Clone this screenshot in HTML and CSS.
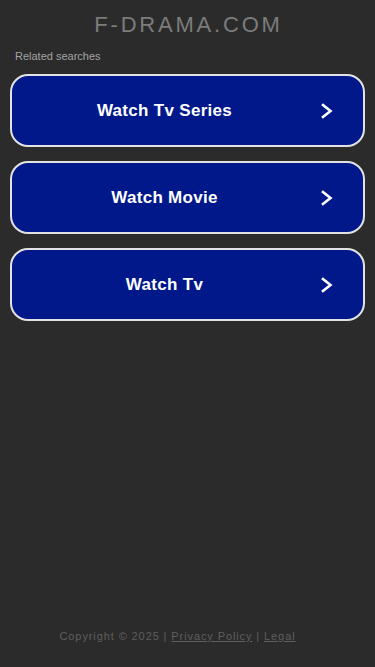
FILE: index.html
```html
<!DOCTYPE html>
<html lang="en">
<head>
<meta charset="utf-8">
<meta name="viewport" content="width=device-width, initial-scale=1">
<title>f-drama.com</title>
<link rel="stylesheet" href="styles.css">
</head>
<body>
<div class="page">
  <header class="header">
    <div class="domain">F-DRAMA.COM</div>
  </header>
  <main class="main">
    <div class="related">Related searches</div>
    <div class="links">
      <a class="link" href="#"><span class="link-text">Watch Tv Series</span><svg class="chev" width="20" height="20" viewBox="0 0 20 20"><path d="M6 4 L13.5 10 L6 16" fill="none" stroke="#fff" stroke-width="2.6" stroke-linecap="square" stroke-linejoin="miter"/></svg></a>
      <a class="link" href="#"><span class="link-text">Watch Movie</span><svg class="chev" width="20" height="20" viewBox="0 0 20 20"><path d="M6 4 L13.5 10 L6 16" fill="none" stroke="#fff" stroke-width="2.6" stroke-linecap="square" stroke-linejoin="miter"/></svg></a>
      <a class="link" href="#"><span class="link-text">Watch Tv</span><svg class="chev" width="20" height="20" viewBox="0 0 20 20"><path d="M6 4 L13.5 10 L6 16" fill="none" stroke="#fff" stroke-width="2.6" stroke-linecap="square" stroke-linejoin="miter"/></svg></a>
    </div>
  </main>
  <footer class="footer">
    Copyright © 2025 | <a href="#" class="flink">Privacy Policy</a> | <a href="#" class="flink">Legal</a>
  </footer>
</div>
</body>
</html>
```
FILE: styles.css
```css
html, body {
  margin: 0;
  padding: 0;
  background: #2b2b2b;
}
body {
  font-family: "Liberation Sans", Arial, sans-serif;
}
.page {
  min-height: 667px;
  display: flex;
  flex-direction: column;
}
.header {
  padding-top: 12px;
  text-align: center;
}
.domain {
  font-size: 22px;
  line-height: 25px;
  color: #7c7c7c;
  letter-spacing: 2.8px;
  padding-left: 2px;
}
.main {
  padding: 12px 10px 0 10px;
}
.related {
  font-size: 11px;
  line-height: 14px;
  color: #a3a3a3;
  padding-left: 5px;
  margin-bottom: 11px;
}
.links {
  display: flex;
  flex-direction: column;
  gap: 14px;
}
.link {
  display: flex;
  align-items: center;
  height: 69px;
  background: #00188a;
  border: 2px solid #e2e2e2;
  border-radius: 18px;
  padding: 0 26px 0 0;
  text-decoration: none;
}
.link-text {
  flex: 1;
  text-align: center;
  color: #fff;
  font-weight: bold;
  font-size: 17px;
  letter-spacing: 0.3px;
}
.chev {
  display: block;
  flex: none;
}
.footer {
  margin-top: auto;
  padding-bottom: 24px;
  padding-right: 20px;
  text-align: center;
  font-size: 11px;
  line-height: 14px;
  letter-spacing: 0.9px;
  color: #5e5e5e;
}
.flink {
  color: #5e5e5e;
  text-decoration: underline;
}
```
